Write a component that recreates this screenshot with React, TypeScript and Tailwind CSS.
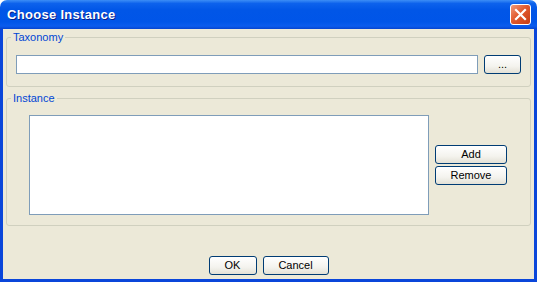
import React from "react";

function XPButton({ label, className = "" }: { label: string; className?: string }) {
  return (
    <button
      className={
        "h-[19px] rounded-[3px] border border-[#003C74] bg-[linear-gradient(#FFFFFF,#F4F3EE_60%,#E3E1D6)] text-[11px] leading-none text-black flex items-center justify-center " +
        className
      }
    >
      {label}
    </button>
  );
}

export default function App() {
  return (
    <div
      className="w-[537px] h-[282px] flex flex-col overflow-hidden"
      style={{ fontFamily: '"Liberation Sans", Arial, sans-serif' }}
    >
      {/* Title bar */}
      <div className="h-[29px] shrink-0 rounded-t-[7px] bg-[linear-gradient(#3C8EF6_0%,#0D62EC_12%,#0156E7_35%,#0055E8_75%,#0A5CEE_90%,#0644CF_100%)] flex items-center pl-[7px] pr-[6px]">
        <span className="text-white font-bold text-[13px] tracking-[0.3px] [text-shadow:1px_1px_0_#0A1E8A]">
          Choose Instance
        </span>
        <div className="ml-auto w-[21px] h-[21px] rounded-[3px] border border-white bg-[linear-gradient(135deg,#F09A7A,#E25A2E_45%,#C53C15)] flex items-center justify-center">
          <svg width="13" height="13" viewBox="0 0 13 13">
            <path d="M2 2 L11 11 M11 2 L2 11" stroke="white" strokeWidth="2.2" strokeLinecap="square" />
          </svg>
        </div>
      </div>
      {/* Body */}
      <div className="flex-1 flex flex-col bg-[#ECE9D8] border-x-[3px] border-b-[3px] border-[#0A46DA] px-[3px] pt-[2px]">
        <fieldset className="h-[56px] border border-[#D0D0BF] rounded-[3px] flex items-start">
          <legend className="ml-[4px] px-[2px] text-[11px] leading-[13px] text-[#0046D5]">Taxonomy</legend>
          <div className="w-full flex items-center mt-[11px] ml-[9px]">
            <div className="w-[462px] h-[19px] bg-white border border-[#7F9DB9]" />
            <XPButton label="..." className="ml-[6px] w-[37px]" />
          </div>
        </fieldset>
        <fieldset className="mt-[5px] h-[134px] border border-[#D0D0BF] rounded-[3px] flex items-start">
          <legend className="ml-[4px] px-[2px] text-[11px] leading-[13px] text-[#0046D5]">Instance</legend>
          <div className="flex items-center mt-[10px] ml-[22px]">
            <div className="w-[400px] h-[100px] bg-white border border-[#7F9DB9]" />
            <div className="ml-[6px] flex flex-col gap-[2px]">
              <XPButton label="Add" className="w-[72px]" />
              <XPButton label="Remove" className="w-[72px]" />
            </div>
          </div>
        </fieldset>
        <div className="flex justify-center gap-[6px] mt-[30px]">
          <XPButton label="OK" className="w-[48px]" />
          <XPButton label="Cancel" className="w-[66px]" />
        </div>
      </div>
    </div>
  );
}
